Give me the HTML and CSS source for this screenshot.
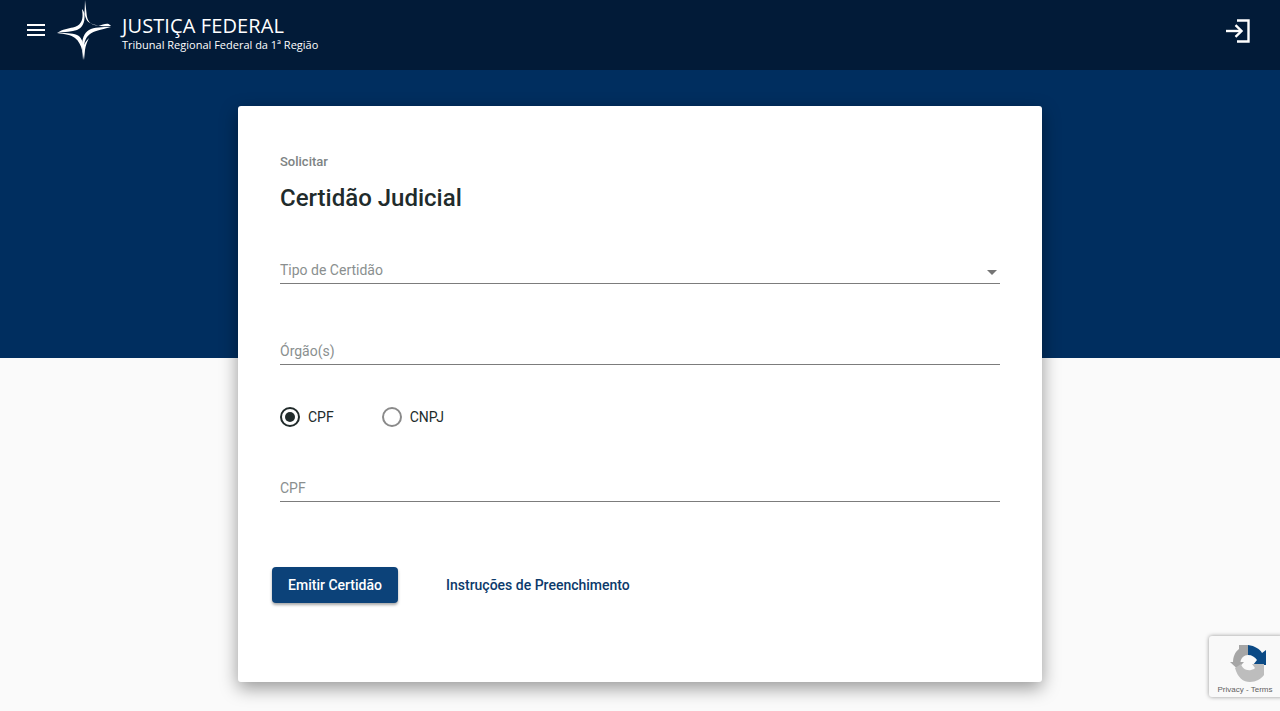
FILE: index.html
```html
<!DOCTYPE html>
<html lang="pt-BR">
<head>
    <meta charset="UTF-8">
    <meta name="viewport" content="width=device-width, initial-scale=1.0">
    <title>Certidão Judicial - Justiça Federal</title>
    <link rel="stylesheet" href="styles.css">
</head>
<body>
    <header class="topbar">
        <button class="icon-btn menu-btn" aria-label="Menu">
            <svg width="24" height="24" viewBox="0 0 24 24"><path fill="#fff" d="M3 18h18v-2H3v2zm0-5h18v-2H3v2zm0-7v2h18V6H3z"/></svg>
        </button>
        <div class="brand">
            <svg class="brand-logo" width="56" height="60" viewBox="0 0 56 60">
                <path fill="#fff" d="M29 0 L30.5 13 C31 21 34 25 42 25.5 C47 25.5 51 22 54 25 L55 26 C46 27 37 25 32.5 22 C31 21 29.5 18 28.5 14 Z"/>
                <path fill="#fff" d="M26 9 L26.5 14 C27 21 24 26 17 27.5 C12 28.5 7 29 1 33 C9 32 16 31.5 21 30 C26 28 29 23 28.5 15 C28.3 12 27 10 26 9 Z"/>
                <path fill="#fff" d="M1 33 C9 34 15 35 19 38 C23 41 25 46 26 50 L27 46 C27 41 25 37 21 35 C16 33 8 33 1 33 Z"/>
                <path fill="#fff" d="M27 60 L28 49 C28 41 30 37 34 34 C38 31 44 30 55 27 C46 27 38 27 33 30 C28 33 26 39 26 46 Z"/>
                <path fill="#fff" d="M28 60 L29 50 C29.5 46 31 42 33 38 C30 41 27 45 26.5 51 Z"/>
            </svg>
            <div class="brand-text">
                <div class="brand-title">JUSTIÇA FEDERAL</div>
                <div class="brand-sub">Tribunal Regional Federal da 1ª Região</div>
            </div>
        </div>
        <button class="icon-btn login-btn" aria-label="Entrar">
            <svg width="28" height="28" viewBox="0 0 28 28" fill="none" stroke="#fff" stroke-width="2.4"><path d="M2 14h15"/><path d="M11.5 8.2 17.5 14l-6 5.8"/><path d="M13 3.5h11.5v21H13"/></svg>
        </button>
    </header>

    <div class="hero"></div>

    <main class="card">
        <p class="card-kicker">Solicitar</p>
        <h1 class="card-title">Certidão Judicial</h1>

        <div class="field field-select">
            <span class="field-label">Tipo de Certidão</span>
            <span class="select-arrow"></span>
        </div>
        <div class="field field-orgao">
            <span class="field-label">Órgão(s)</span>
        </div>

        <div class="radio-row">
            <label class="radio"><span class="radio-mark checked"></span>CPF</label>
            <label class="radio"><span class="radio-mark"></span>CNPJ</label>
        </div>

        <div class="field field-cpf">
            <span class="field-label">CPF</span>
        </div>

        <div class="actions">
            <button class="btn-primary">Emitir Certidão</button>
            <a class="btn-link" href="#">Instruções de Preenchimento</a>
        </div>
    </main>

    <div class="recaptcha">
        <svg width="38" height="38" viewBox="0 0 38 38">
            <path fill="#a6a6a6" d="M11 1h9v10c-4 0-7 3-7.500 7H16l-6.500 7L2 18h3C5 13 7 8 11 5z"/>
            <path fill="#0b4a85" d="M20 1c7 1 12 4 14 8l4-3v15H25l4-5c-2-3-5-5-9-5z"/>
            <path fill="#bdbdbd" d="M7 24l6-4c1 4 5 7 10 6 2-.500 3-1 4-2l-3-4h12v11c-3 4-8 7-14 7-7 0-12-4-15-14z"/>
        </svg>
        <div class="recaptcha-links">Privacy - Terms</div>
    </div>
</body>
</html>
```

FILE: styles.css
```css
* {
    box-sizing: border-box;
}
html, body {
    height: 711px;
    overflow: hidden;
}
body {
    margin: 0;
    font-family: Roboto, Arial, sans-serif;
    background-color: #fafafa;
    color: #212b2b;
}
.topbar {
    height: 70px;
    background-color: #021b38;
    display: flex;
    align-items: center;
    padding: 0 24px;
}
.icon-btn {
    background: none;
    border: none;
    padding: 0;
    display: flex;
    cursor: pointer;
}
.menu-btn {
    margin-top: -10px;
}
.brand {
    display: flex;
    align-items: flex-start;
    margin-left: 8px;
    height: 70px;
    color: #fff;
}
.brand-logo {
    margin-left: 0;
    margin-top: 0;
}
.brand-text {
    margin-left: 10px;
    margin-top: 14px;
}
.brand-title {
    font-family: "Open Sans", sans-serif;
    font-size: 20px;
    line-height: 24px;
    letter-spacing: 0.1px;
    white-space: nowrap;
}
.brand-sub {
    font-family: "Open Sans", sans-serif;
    font-size: 11px;
    line-height: 14px;
    white-space: nowrap;
}
.login-btn {
    margin-left: auto;
    margin-right: 4px;
    margin-top: -8px;
}
.hero {
    height: 288px;
    background-color: #002e5f;
}
.card {
    position: relative;
    width: 804px;
    height: 576px;
    margin: -252px auto 0;
    background-color: #fff;
    border-radius: 3px;
    padding: 48px 42px 0;
    box-shadow: 0 6px 18px rgba(0, 0, 0, 0.4);
}
.card-kicker {
    margin: 0;
    font-size: 13px;
    font-weight: 500;
    line-height: 16px;
    color: #7d8383;
}
.card-title {
    margin: 14px 0 0;
    font-size: 24px;
    font-weight: 500;
    line-height: 28px;
    color: #212b2b;
}
.field {
    position: relative;
    display: flex;
    align-items: flex-end;
    height: 28px;
    width: 720px;
    border-bottom: 1px solid #7c7c7c;
    padding-bottom: 5px;
}
.field-select {
    margin-top: 44px;
}
.field-orgao {
    margin-top: 53px;
}
.field-cpf {
    margin-top: 47px;
}
.field-label {
    font-size: 14px;
    line-height: 16px;
    color: #8a8f8f;
}
.select-arrow {
    position: absolute;
    right: 3px;
    top: 14px;
    border-left: 5px solid transparent;
    border-right: 5px solid transparent;
    border-top: 5px solid #757575;
}
.radio-row {
    display: flex;
    gap: 48px;
    margin-top: 42px;
    height: 20px;
}
.radio {
    display: flex;
    align-items: center;
    gap: 8px;
    font-size: 14px;
    color: #212b2b;
}
.radio-mark {
    position: relative;
    width: 20px;
    height: 20px;
    border: 2px solid #8a8a8a;
    border-radius: 50%;
}
.radio-mark.checked {
    border-color: #212b2b;
}
.radio-mark.checked::after {
    content: "";
    position: absolute;
    top: 3px;
    left: 3px;
    width: 10px;
    height: 10px;
    border-radius: 50%;
    background-color: #212b2b;
}
.actions {
    display: flex;
    align-items: center;
    gap: 48px;
    margin: 65px 0 0 -8px;
}
.btn-primary {
    width: 126px;
    height: 36px;
    background-color: #0c4279;
    color: #fff;
    border: none;
    border-radius: 4px;
    font-family: Roboto, Arial, sans-serif;
    font-size: 14px;
    font-weight: 500;
    box-shadow: 0 2px 3px rgba(0, 0, 0, 0.35);
    cursor: pointer;
}
.btn-link {
    color: #0c3a6b;
    font-size: 14px;
    font-weight: 500;
    text-decoration: none;
}
.recaptcha {
    position: absolute;
    right: -4px;
    top: 636px;
    width: 75px;
    height: 61px;
    background-color: #f9f9f9;
    border-radius: 3px;
    box-shadow: 0 0 4px rgba(0, 0, 0, 0.4);
    display: flex;
    flex-direction: column;
    align-items: center;
    padding-top: 8px;
}
.recaptcha-links {
    margin-top: 3px;
    margin-right: 3px;
    font-family: "Liberation Sans", Arial, sans-serif;
    font-size: 8px;
    line-height: 10px;
    color: #5f5f5f;
    white-space: nowrap;
}
```
